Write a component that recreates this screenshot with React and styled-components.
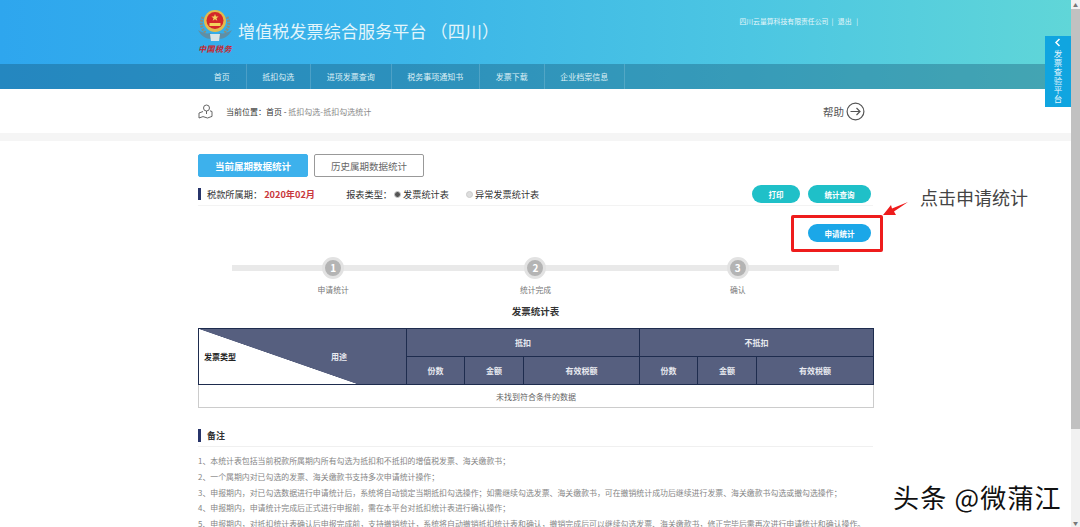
import React from "react";
import styled, { createGlobalStyle } from "styled-components";

const GlobalStyle = createGlobalStyle`
  html, body {
    margin: 0;
    height: 100%;
    overflow: hidden;
    background: #fff;
    font-family: "Noto Sans CJK SC", "Liberation Sans", sans-serif;
  }
`;

const Screen = styled.div`
  position: relative;
  display: flex;
  width: 1080px;
  height: 527px;
  overflow: hidden;
`;

const Page = styled.div`
  width: 1071px;
  flex: none;
`;

const Scrollbar = styled.div`
  width: 9px;
  flex: none;
  display: flex;
  flex-direction: column;
  align-items: center;
  background: #f1f1f1;
  color: #777;
  font-size: 5px;
  line-height: 9px;
`;

const Thumb = styled.div`
  width: 100%;
  height: 420px;
  background: #c1c1c1;
`;

const ScrollArrow = styled.div`
  height: 9px;
  flex: none;
`;

const ScrollGap = styled.div`
  flex: 1;
`;

const Top = styled.div`
  height: 89px;
  background: linear-gradient(90deg, #2ea6ee 0%, #3cb6e8 40%, #4cc6e2 70%, #60d6d8 100%);
`;

const Brand = styled.div`
  height: 64px;
  padding: 0 198px;
  display: flex;
  justify-content: space-between;
`;

const Logo = styled.div`
  display: flex;
  align-items: flex-start;
  gap: 6px;
  padding-top: 9px;
`;

const Emblem = styled.div`
  width: 34px;
  display: flex;
  flex-direction: column;
  align-items: center;
`;

const SealText = styled.span`
  margin-top: 2px;
  font-size: 8px;
  line-height: 9px;
  letter-spacing: 0.4px;
  font-weight: 700;
  font-style: italic;
  color: #c8252b;
  white-space: nowrap;
`;

const Title = styled.h1`
  margin: 9px 0 0;
  font-size: 17px;
  line-height: 26px;
  font-weight: 400;
  letter-spacing: 0.15px;
  color: #e2f5fb;
  white-space: nowrap;
`;

const Account = styled.div`
  margin-top: 16px;
  margin-right: 15px;
  font-size: 6.85px;
  line-height: 10px;
  color: #e6f6fa;
  white-space: pre;
`;

const Nav = styled.nav`
  height: 25px;
  padding-left: 198px;
  display: flex;
  background: rgba(20, 80, 110, 0.36);
`;

const NavItem = styled.a`
  padding: 0 15.75px;
  border-right: 1px solid rgba(255, 255, 255, 0.16);
  font-size: 8px;
  line-height: 25px;
  color: #dcf0f6;
  white-space: nowrap;
`;

const Crumbs = styled.div`
  height: 44px;
  padding: 0 206px 0 198px;
  display: flex;
  align-items: center;
  border-bottom: 8px solid #f5f5f5;
`;

const CrumbText = styled.span`
  margin-left: 13px;
  font-size: 8px;
  color: #333;
`;

const CrumbTail = styled.span`
  color: #888;
`;

const Help = styled.div`
  margin-left: auto;
  display: flex;
  align-items: center;
  gap: 2px;
  font-size: 10.5px;
  color: #555;
`;

const Content = styled.main`
  width: 675px;
  margin-left: 198px;
`;

const Tabs = styled.div`
  padding-top: 13px;
  display: flex;
  gap: 6px;
`;

const Tab = styled.button`
  width: 110px;
  height: 23px;
  padding: 0;
  border: 1px solid ${(p) => (p.$active ? "#3db1ec" : "#999")};
  border-radius: 2px;
  background: ${(p) => (p.$active ? "#3db1ec" : "#fff")};
  color: ${(p) => (p.$active ? "#fff" : "#666")};
  font-family: inherit;
  font-size: 9.5px;
  font-weight: ${(p) => (p.$active ? 700 : 400)};
`;

const FilterBar = styled.div`
  height: 22px;
  padding-top: 6px;
  display: flex;
  align-items: center;
  border-bottom: 1px solid #f3f3f3;
  font-size: 9.2px;
  color: #333;
`;

const BarLabel = styled.span`
  padding-left: 6px;
  border-left: 3px solid #27346a;
  line-height: 12px;
`;

const Period = styled.strong`
  margin-left: 2px;
  width: 82px;
  color: #c9383c;
  font-size: 9.2px;
`;

const Radio = styled.span`
  width: 5px;
  height: 5px;
  margin: 0 2px 0 ${(p) => p.$gap}px;
  border: 1px solid #ccc;
  border-radius: 50%;
  background: ${(p) => (p.$on ? "#555" : "#ddd")};
`;

const Pill = styled.button`
  width: ${(p) => p.$w}px;
  height: 18px;
  padding: 0;
  border: 0;
  border-radius: 9px;
  background: ${(p) => p.$bg};
  color: #fff;
  font-family: inherit;
  font-size: 7.5px;
  font-weight: 700;
`;

const Actions = styled.div`
  margin-left: auto;
  margin-right: 2px;
  display: flex;
  gap: 8px;
`;

const ApplyRow = styled.div`
  padding: 18px 2px 0 0;
  display: flex;
  justify-content: flex-end;
`;

const Steps = styled.div`
  width: 607px;
  margin: 15px 0 0 34px;
  display: grid;
  grid-template-columns: repeat(3, 1fr);
  background: linear-gradient(#e9e9e9, #e9e9e9) 0 8px / 100% 6px no-repeat;
`;

const Step = styled.div`
  display: flex;
  flex-direction: column;
  align-items: center;
  gap: 5px;
`;

const StepNum = styled.div`
  width: 16px;
  height: 16px;
  border: 3px solid #e2e2e2;
  border-radius: 50%;
  background: #b4b4b4;
  color: #fff;
  font-size: 10px;
  font-weight: 700;
  line-height: 16px;
  text-align: center;
`;

const StepLabel = styled.span`
  font-size: 7.8px;
  line-height: 11px;
  color: #777;
`;

const TableTitle = styled.h2`
  margin: 9px 0 10px;
  font-size: 9.5px;
  line-height: 14px;
  font-weight: 700;
  text-align: center;
  color: #333;
`;

const Grid = styled.table`
  width: 675px;
  border-collapse: collapse;
  table-layout: fixed;
  font-size: 8px;
`;

const Head = styled.th`
  height: 27px;
  padding: 0;
  border: 1px solid #1e2c4e;
  background: #565f7f;
  color: #e8eaf0;
  font-weight: 700;
`;

const DiagonalHead = styled.th`
  padding: 0 59px 0 5px;
  border: 1px solid #1e2c4e;
  background: linear-gradient(to top right, #fff 49.7%, #565f7f 50.3%) 0 0 / 158px 100% no-repeat, #565f7f;
  font-weight: 700;
`;

const DiagonalRow = styled.div`
  display: flex;
  justify-content: space-between;
  color: #222;
`;

const UseLabel = styled.span`
  color: #e8eaf0;
`;

const Empty = styled.td`
  height: 22px;
  padding: 0;
  border: 1px solid #ccc;
  border-top: 1px solid #aaa;
  text-align: center;
  color: #666;
`;

const NoteHead = styled.div`
  margin-top: 21px;
  padding-bottom: 4px;
  border-bottom: 1px solid #f0f0f0;
  font-size: 9px;
  font-weight: 700;
  color: #333;
`;

const NoteList = styled.ol`
  margin: 6px 0 0;
  padding: 0;
  list-style: none;
  white-space: nowrap;
  font-size: 7.9px;
  line-height: 15.75px;
  color: #858585;
`;

const SideTab = styled.a`
  position: absolute;
  top: 36px;
  left: 1045px;
  width: 26px;
  height: 71px;
  display: flex;
  flex-direction: column;
  align-items: center;
  padding-top: 2px;
  box-sizing: border-box;
  background: #10a5e0;
  color: #e8f7fd;
  font-size: 8.5px;
`;

const SideText = styled.span`
  margin-top: 3px;
  writing-mode: vertical-rl;
  text-orientation: upright;
  letter-spacing: 0.4px;
  line-height: 10px;
`;

const Callout = styled.div`
  position: absolute;
  left: 791px;
  top: 215px;
  width: 92px;
  height: 37px;
  box-sizing: border-box;
  border: 3px solid #ee1c1c;
  border-radius: 2px;
`;

const CalloutArrow = styled.svg`
  position: absolute;
  left: 883px;
  top: 201px;
`;

const CalloutText = styled.div`
  position: absolute;
  left: 920px;
  top: 184px;
  font-size: 18px;
  line-height: 26px;
  color: #444;
  white-space: nowrap;
`;

const Watermark = styled.div`
  position: absolute;
  left: 893px;
  top: 480px;
  font-size: 26px;
  line-height: 34px;
  letter-spacing: 1.2px;
  color: #111;
  white-space: nowrap;
  text-shadow: 1px 1px 0 #fff;
`;

const navItems = ["首页", "抵扣勾选", "进项发票查询", "税务事项通知书", "发票下载", "企业档案信息"];

const notes = [
  "1、本统计表包括当前税款所属期内所有勾选为抵扣和不抵扣的增值税发票、海关缴款书；",
  "2、一个属期内对已勾选的发票、海关缴款书支持多次申请统计操作；",
  "3、申报期内，对已勾选数据进行申请统计后，系统将自动锁定当期抵扣勾选操作；如需继续勾选发票、海关缴款书，可在撤销统计成功后继续进行发票、海关缴款书勾选或撤勾选操作；",
  "4、申报期内，申请统计完成后正式进行申报前，需在本平台对抵扣统计表进行确认操作；",
  "5、申报期内，对抵扣统计表确认后申报完成前，支持撤销统计，系统将自动撤销抵扣统计表和确认，撤销完成后可以继续勾选发票、海关缴款书，修正完毕后需再次进行申请统计和确认操作。",
];

const TaxEmblem = () => (
  <svg width="34" height="33" viewBox="0 0 34 33">
    <path d="M5 8c-3 5-2 12 3 16M29 8c3 5 2 12-3 16" stroke="#8b8f7c" strokeWidth="3" fill="none" strokeDasharray="2 1" />
    <path d="M0 21c5 3 9 4 12 3l5 3 5-3c3 1 7 0 12-3-3 6-8 9-13 9h-8C8 30 3 27 0 21z" fill="#5f8fa6" />
    <path d="M12 25h10l-1 7h-8z" fill="#d9e4e6" />
    <circle cx="17" cy="12" r="11" fill="#e3bb4d" />
    <circle cx="17" cy="11.5" r="8.5" fill="#d3262a" />
    <path d="M17 5l1 2.6h2.6l-2.1 1.6.8 2.6-2.3-1.6-2.3 1.6.8-2.6-2.1-1.6H16z" fill="#f3d25c" />
    <rect x="11.5" y="14" width="11" height="3" fill="#f3d25c" />
  </svg>
);

const PinMap = () => (
  <svg width="15" height="15" viewBox="0 0 15 15" fill="none" stroke="#555" strokeWidth="0.9">
    <circle cx="8.5" cy="4" r="3" />
    <path d="M8.5 7v3M5 7.5L1 9v5l4-1.4 4.5 1.4 4.5-1.6V7.5L12 6.8" strokeLinejoin="round" />
  </svg>
);

const HelpArrow = () => (
  <svg width="19" height="19" viewBox="0 0 19 19" fill="none" stroke="#555" strokeWidth="1.2">
    <circle cx="9.5" cy="9.5" r="8.4" />
    <path d="M4.5 9.5h9.5M10.5 6l3.5 3.5-3.5 3.5" />
  </svg>
);

const Chevron = () => (
  <svg width="8" height="9" viewBox="0 0 8 9" fill="none" stroke="#fff" strokeWidth="1.5">
    <path d="M5.5 1L2 4.5 5.5 8" />
  </svg>
);

export default function App() {
  return (
    <Screen>
      <GlobalStyle />
      <Page>
        <Top>
          <Brand>
            <Logo>
              <Emblem>
                <TaxEmblem />
                <SealText>中国税务</SealText>
              </Emblem>
              <Title>增值税发票综合服务平台 （四川）</Title>
            </Logo>
            <Account>四川云量算科技有限责任公司  |   退出   |</Account>
          </Brand>
          <Nav>
            {navItems.map((item) => (
              <NavItem key={item}>{item}</NavItem>
            ))}
          </Nav>
        </Top>
        <Crumbs>
          <PinMap />
          <CrumbText>
            当前位置：首页 - <CrumbTail>抵扣勾选-抵扣勾选统计</CrumbTail>
          </CrumbText>
          <Help>
            帮助 <HelpArrow />
          </Help>
        </Crumbs>
        <Content>
          <Tabs>
            <Tab $active>当前属期数据统计</Tab>
            <Tab>历史属期数据统计</Tab>
          </Tabs>
          <FilterBar>
            <BarLabel>税款所属期：</BarLabel>
            <Period>2020年02月</Period>
            <span>报表类型：</span>
            <Radio $gap={2} $on />
            <span>发票统计表</span>
            <Radio $gap={17} />
            <span>异常发票统计表</span>
            <Actions>
              <Pill $w={48} $bg="#1fc0c8">打印</Pill>
              <Pill $w={63} $bg="#1fc0c8">统计查询</Pill>
            </Actions>
          </FilterBar>
          <ApplyRow>
            <Pill $w={63} $bg="#1ba7e8">申请统计</Pill>
          </ApplyRow>
          <Steps>
            <Step>
              <StepNum>1</StepNum>
              <StepLabel>申请统计</StepLabel>
            </Step>
            <Step>
              <StepNum>2</StepNum>
              <StepLabel>统计完成</StepLabel>
            </Step>
            <Step>
              <StepNum>3</StepNum>
              <StepLabel>确认</StepLabel>
            </Step>
          </Steps>
          <TableTitle>发票统计表</TableTitle>
          <Grid>
            <colgroup>
              <col width="208" />
              <col width="58" />
              <col width="59" />
              <col width="116" />
              <col width="58" />
              <col width="59" />
              <col width="117" />
            </colgroup>
            <thead>
              <tr>
                <DiagonalHead rowSpan={2}>
                  <DiagonalRow>
                    <span>发票类型</span>
                    <UseLabel>用途</UseLabel>
                  </DiagonalRow>
                </DiagonalHead>
                <Head colSpan={3}>抵扣</Head>
                <Head colSpan={3}>不抵扣</Head>
              </tr>
              <tr>
                <Head>份数</Head>
                <Head>金额</Head>
                <Head>有效税额</Head>
                <Head>份数</Head>
                <Head>金额</Head>
                <Head>有效税额</Head>
              </tr>
            </thead>
            <tbody>
              <tr>
                <Empty colSpan={7}>未找到符合条件的数据</Empty>
              </tr>
            </tbody>
          </Grid>
          <NoteHead>
            <BarLabel>备注</BarLabel>
          </NoteHead>
          <NoteList>
            {notes.map((note) => (
              <li key={note}>{note}</li>
            ))}
          </NoteList>
        </Content>
      </Page>
      <Scrollbar>
        <ScrollArrow>▲</ScrollArrow>
        <Thumb />
        <ScrollGap />
        <ScrollArrow>▼</ScrollArrow>
      </Scrollbar>
      <SideTab>
        <Chevron />
        <SideText>发票查验平台</SideText>
      </SideTab>
      <Callout />
      <CalloutArrow width="26" height="16" viewBox="0 0 26 16">
        <path d="M0 14L8 4l1 3.5L25 1 11 10.5l2 3.5z" fill="#ee1c1c" />
      </CalloutArrow>
      <CalloutText>点击申请统计</CalloutText>
      <Watermark>头条 @微蒲江</Watermark>
    </Screen>
  );
}
